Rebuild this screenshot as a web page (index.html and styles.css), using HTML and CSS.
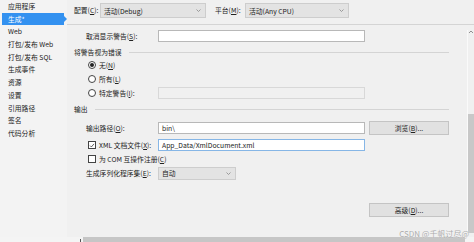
FILE: index.html
```html
<!DOCTYPE html>
<html lang="zh-CN">
<head>
  <meta charset="UTF-8" />
  <title>项目属性 - 生成</title>
  <link rel="stylesheet" href="styles.css">
</head>
<body>

  <div class="frame">
    <ul class="nav">
      <li>应用程序</li>
      <li class="active">生成*</li>
      <li>Web</li>
      <li>打包/发布 Web</li>
      <li>打包/发布 SQL</li>
      <li>生成事件</li>
      <li>资源</li>
      <li>设置</li>
      <li>引用路径</li>
      <li>签名</li>
      <li>代码分析</li>
    </ul>

    <div class="main">
      <div class="toolbar">
        <span class="tlabel">配置(<u>C</u>):</span>
        <div class="select sel-config">活动(Debug)<svg width="5" height="3" viewBox="0 0 5 3"><polyline points="0.5,0.5 2.5,2.5 4.5,0.5" fill="none" stroke="#888" stroke-width="0.8"/></svg></div>
        <span class="tlabel plat">平台(<u>M</u>):</span>
        <div class="select sel-plat">活动(Any CPU)<svg width="5" height="3" viewBox="0 0 5 3"><polyline points="0.5,0.5 2.5,2.5 4.5,0.5" fill="none" stroke="#888" stroke-width="0.8"/></svg></div>
      </div>

      <div class="body">
        <div class="content">
          <div class="field r-suppress">
            <span class="flabel">取消显示警告(<u>S</u>):</span>
            <div class="input"></div>
          </div>

          <div class="group">将警告视为错误</div>
          <div class="opt"><span class="radio on"></span>无(<u>N</u>)</div>
          <div class="opt"><span class="radio"></span>所有(<u>L</u>)</div>
          <div class="field r-specific">
            <span class="opt"><span class="radio"></span>特定警告(<u>I</u>):</span>
            <div class="input disabled"></div>
          </div>

          <div class="group g-out">输出</div>
          <div class="field r-path">
            <span class="flabel">输出路径(<u>O</u>):</span>
            <div class="input">bin\</div>
            <div class="button">浏览(<u>B</u>)...</div>
          </div>
          <div class="field r-xml">
            <span class="opt"><span class="check on"><svg width="7" height="7" viewBox="0 0 7 7"><polyline points="1.2,3.6 2.8,5.2 5.8,1.6" fill="none" stroke="#333" stroke-width="0.9"/></svg></span>XML 文档文件(<u>X</u>):</span>
            <div class="input focus">App_Data/XmlDocument.xml</div>
          </div>
          <div class="opt r-com"><span class="check"></span>为 COM 互操作注册(<u>C</u>)</div>
          <div class="field r-serial">
            <span class="flabel">生成序列化程序集(<u>E</u>):</span>
            <div class="select sel-auto">自动<svg width="5" height="3" viewBox="0 0 5 3"><polyline points="0.5,0.5 2.5,2.5 4.5,0.5" fill="none" stroke="#888" stroke-width="0.8"/></svg></div>
          </div>
          <div class="field r-adv">
            <span></span>
            <span></span>
            <div class="button">高级(<u>D</u>)...</div>
          </div>
        </div>

        <div class="vscroll">
          <svg width="6" height="4" viewBox="0 0 6 4"><polyline points="1,3 3,1 5,3" fill="none" stroke="#777" stroke-width="0.8"/></svg>
          <div class="thumb"></div>
        </div>
      </div>
    </div>
  </div>

  <div class="hbar-wrap">
    <span class="tick"></span>
    <div class="hbar"></div>
  </div>

  <div class="watermark">CSDN @千帆过尽@</div>

</body>
</html>
```

FILE: styles.css
```css
body {
  margin: 0;
  width: 474px;
  height: 242px;
  overflow: hidden;
  position: relative;
  background: #f0f0f0;
  color: #222;
  font-family: "Noto Sans CJK SC", "Microsoft YaHei", sans-serif;
  font-size: 6.8px;
}
u {
  text-decoration-thickness: 0.5px;
  text-underline-offset: 1px;
}
.frame {
  display: flex;
  height: 237px;
}
.nav {
  list-style: none;
  margin: 0;
  padding: 0;
  width: 70px;
  background: #f3f3f3;
}
.nav li {
  height: 12.7px;
  line-height: 12.7px;
  padding-left: 8px;
  white-space: nowrap;
}
.nav li.active {
  position: relative;
  margin: 0 3px 0 2px;
  padding-left: 6px;
  background: #3391f0;
  color: #fff;
}
.nav li.active::after {
  content: "";
  position: absolute;
  right: -3px;
  top: 3.5px;
  border-left: 3px solid #3391f0;
  border-top: 3px solid transparent;
  border-bottom: 3px solid transparent;
}
.main {
  flex: 1;
  display: flex;
  flex-direction: column;
}
.toolbar {
  box-sizing: border-box;
  height: 25px;
  padding: 3px 0 0 7px;
  display: flex;
  align-items: flex-start;
  border-bottom: 1px solid #d4d4d4;
}
.tlabel {
  width: 26px;
  line-height: 15px;
  white-space: nowrap;
}
.tlabel.plat {
  margin-left: 9px;
  width: 30px;
}
.select {
  box-sizing: border-box;
  height: 15px;
  padding: 0 4px 0 3px;
  display: flex;
  align-items: center;
  justify-content: space-between;
  background: #e3e3e3;
  border: 1px solid #cdcdcd;
  white-space: nowrap;
}
.sel-config {
  width: 106px;
}
.sel-plat {
  width: 104px;
}
.sel-auto {
  width: 78px;
  height: 13px;
}
.body {
  flex: 1;
  display: flex;
}
.content {
  flex: 1;
  padding-right: 18px;
}
.field {
  display: grid;
  grid-template-columns: 87px 207px 80px;
  column-gap: 4px;
  align-items: center;
}
.flabel {
  padding-left: 19px;
  white-space: nowrap;
}
.input {
  box-sizing: border-box;
  height: 12px;
  padding-left: 3px;
  line-height: 10px;
  background: #fff;
  border: 1px solid #b8b8b8;
  white-space: nowrap;
}
.input.disabled {
  background: #f0f0f0;
  border-color: #d8d8d8;
}
.input.focus {
  border-color: #86b6e6;
}
.button {
  box-sizing: border-box;
  height: 14px;
  line-height: 12px;
  text-align: center;
  background: #e1e1e1;
  border: 1px solid #c4c4c4;
}
.group {
  height: 12px;
  margin-top: 4px;
  padding-left: 7px;
  display: flex;
  align-items: center;
}
.group::after {
  content: "";
  flex: 1;
  margin-left: 7px;
  border-top: 1px solid #d4d4d4;
}
.g-out {
  margin-top: 3px;
}
.opt {
  height: 14px;
  padding-left: 21px;
  display: flex;
  align-items: center;
  white-space: nowrap;
}
.radio {
  box-sizing: border-box;
  width: 8px;
  height: 8px;
  margin-right: 3px;
  border: 1px solid #444;
  border-radius: 50%;
  background: #fff;
  display: flex;
  align-items: center;
  justify-content: center;
}
.radio.on::before {
  content: "";
  width: 4px;
  height: 4px;
  border-radius: 50%;
  background: #222;
}
.check {
  box-sizing: border-box;
  width: 8px;
  height: 8px;
  margin-right: 3px;
  border: 1px solid #444;
  background: #fff;
  display: flex;
  align-items: center;
  justify-content: center;
}
.r-suppress {
  margin-top: 5px;
}
.r-path {
  margin-top: 6px;
}
.r-xml {
  margin-top: 3px;
}
.r-com {
  height: 13px;
}
.r-serial {
  height: 14px;
  margin-top: 1px;
}
.r-adv {
  margin-top: 23px;
}
.vscroll {
  width: 6px;
  margin: 5px 0 4px;
  display: flex;
  flex-direction: column;
  border-left: 1px solid #fafafa;
}
.thumb {
  margin-top: auto;
  height: 119px;
  background: #c8c8c8;
}
.hbar-wrap {
  height: 5px;
  display: flex;
  align-items: flex-end;
  background: #f4f4f4;
}
.tick {
  width: 1px;
  height: 3px;
  margin-left: 80px;
  background: #555;
}
.hbar {
  width: 382px;
  height: 5px;
  margin-left: 2px;
  background: #c6c6c6;
}
.watermark {
  position: absolute;
  right: 5px;
  bottom: 4px;
  font-size: 8px;
  line-height: 9px;
  color: #aaa;
  text-shadow: 0 0 1px #fff;
  white-space: nowrap;
}
```
